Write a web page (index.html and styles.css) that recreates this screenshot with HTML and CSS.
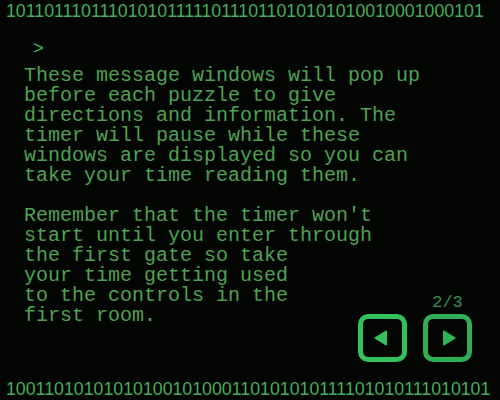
FILE: index.html
```html
<!DOCTYPE html>
<html lang="en">
<head>
<meta charset="utf-8">
<title>Message</title>
<link rel="stylesheet" href="styles.css">
</head>
<body>
<div class="screen">
  <div class="binary">10110111011101010111110111011010101010010001000101</div>
  <main class="console">
    <div class="prompt">&gt;</div>
    <div class="body-row">
      <div class="message">
        <p>These message windows will pop up<br>before each puzzle to give<br>directions and information. The<br>timer will pause while these<br>windows are displayed so you can<br>take your time reading them.</p>
        <p>Remember that the timer won't<br>start until you enter through<br>the first gate so take<br>your time getting used<br>to the controls in the<br>first room.</p>
      </div>
      <div class="controls">
        <span class="page">2/3</span>
        <button class="nav-btn prev" aria-label="Previous">
          <svg width="16" height="16" viewBox="0 0 16 16"><path d="M13 1.5 L2.5 8 L13 14.5 Z" fill="currentColor" stroke="currentColor" stroke-width="2" stroke-linejoin="round"/></svg>
        </button>
        <button class="nav-btn next" aria-label="Next">
          <svg width="16" height="16" viewBox="0 0 16 16"><path d="M3 1.5 L13.5 8 L3 14.5 Z" fill="currentColor" stroke="currentColor" stroke-width="2" stroke-linejoin="round"/></svg>
        </button>
      </div>
    </div>
  </main>
  <div class="binary">10011010101010100101000110101010111101010111010101</div>
</div>
</body>
</html>
```
FILE: styles.css
```css
html, body {
  margin: 0;
  padding: 0;
  background: #000;
}
.screen {
  width: 500px;
  height: 400px;
  display: flex;
  flex-direction: column;
  background: #030503;
  overflow: hidden;
}
.binary {
  height: 22px;
  line-height: 22px;
  padding-left: 6px;
  font-family: "Liberation Sans", Arial, sans-serif;
  font-size: 17.75px;
  color: #46ad5a;
  white-space: nowrap;
}
.console {
  flex: 1;
  display: flex;
  flex-direction: column;
  padding: 17px 28px 16px 24px;
  font-family: "Liberation Mono", "Courier New", monospace;
  font-size: 20px;
  line-height: 20px;
}
.prompt {
  padding-left: 9px;
  color: #3cc060;
  height: 20px;
  font-size: 18px;
}
.body-row {
  flex: 1;
  margin-top: 7px;
  display: grid;
  grid-template-columns: 1fr;
  grid-template-rows: 1fr;
}
.message {
  grid-area: 1 / 1;
  align-self: start;
  justify-self: start;
  color: #4ea252;
  white-space: nowrap;
}
.message p {
  margin: 0;
}
.message p + p {
  margin-top: 20px;
}
.controls {
  grid-area: 1 / 1;
  align-self: end;
  justify-self: end;
  display: grid;
  grid-template-columns: 49px 49px;
  column-gap: 16px;
  row-gap: 3px;
}
.page {
  grid-column: 2;
  justify-self: center;
  font-size: 17px;
  line-height: 17px;
  color: #3f8f4c;
}
.nav-btn {
  grid-row: 2;
  width: 49px;
  height: 48px;
  box-sizing: border-box;
  border: 5px solid #34c05a;
  border-radius: 10px;
  background: transparent;
  color: #34c05a;
  padding: 0;
  display: flex;
  align-items: center;
  justify-content: center;
}
.nav-btn.prev svg {
  margin-right: 4px;
}
.nav-btn.next {
  border-color: #2fae55;
  color: #2fb556;
}
.nav-btn.next svg {
  margin-left: 3px;
}
```
